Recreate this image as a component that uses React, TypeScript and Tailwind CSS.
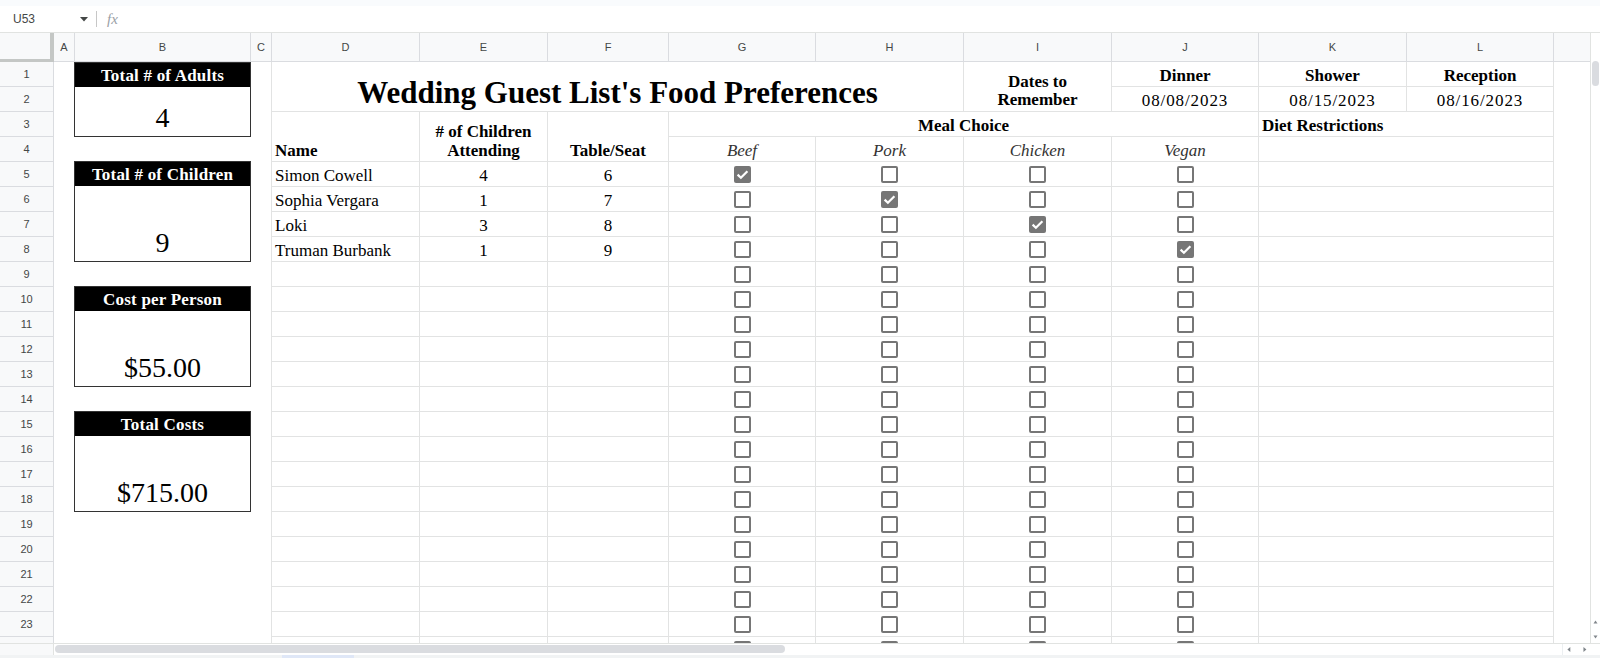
import React from 'react';

const guests = [
  { name: 'Simon Cowell', kids: '4', seat: '6', meal: 0 },
  { name: 'Sophia Vergara', kids: '1', seat: '7', meal: 1 },
  { name: 'Loki', kids: '3', seat: '8', meal: 2 },
  { name: 'Truman Burbank', kids: '1', seat: '9', meal: 3 },
];

const colHeaders = [
  { label: 'A', w: 'w-[21px]' },
  { label: 'B', w: 'w-[176px]' },
  { label: 'C', w: 'w-[21px]' },
  { label: 'D', w: 'w-[148px]' },
  { label: 'E', w: 'w-[128px]' },
  { label: 'F', w: 'w-[121px]' },
  { label: 'G', w: 'w-[147px]' },
  { label: 'H', w: 'w-[148px]' },
  { label: 'I', w: 'w-[148px]' },
  { label: 'J', w: 'w-[147px]' },
  { label: 'K', w: 'w-[148px]' },
  { label: 'L', w: 'w-[147px]' },
];

const summary = [
  { title: 'Total # of Adults', value: '4', h: 'h-[75px]', mt: '' },
  { title: 'Total # of Children', value: '9', h: 'h-[101px]', mt: 'mt-[24px]' },
  { title: 'Cost per Person', value: '$55.00', h: 'h-[101px]', mt: 'mt-[24px]' },
  { title: 'Total Costs', value: '$715.00', h: 'h-[101px]', mt: 'mt-[24px]' },
];

// grid line cell
const cell = 'border-r border-b border-[#e2e3e3]';
const txt = 'flex items-end pb-[1px] leading-[19px]';

const Checkbox = ({ checked }: { checked?: boolean }) =>
  checked ? (
    <span className="flex h-[17px] w-[17px] items-center justify-center rounded-[2px] bg-[#767676]">
      <svg width="15" height="15" viewBox="0 0 15 15">
        <path d="M2.6 7.6 L5.9 10.8 L12.4 4.2" fill="none" stroke="#fff" strokeWidth="2.2" />
      </svg>
    </span>
  ) : (
    <span className="h-[17px] w-[17px] rounded-[2px] border-2 border-[#767676]" />
  );

const TopBar = () => (
  <div className="flex h-[33px] flex-col border-b border-[#e1e3e1]">
    <div className="h-[6px] bg-[#f9fbfd]" />
    <div className="flex flex-1 items-center bg-white font-['Liberation_Sans',sans-serif] text-[12px] text-[#444746]">
      <span className="ml-[13px] w-[67px]">U53</span>
      <svg width="8" height="5" viewBox="0 0 8 5">
        <path d="M0 0 L8 0 L4 4.5 Z" fill="#444746" />
      </svg>
      <span className="ml-[8px] h-[16px] w-px bg-[#c7c7c7]" />
      <span className="ml-[10px] font-['Liberation_Serif',serif] text-[15px] italic text-[#9aa0a6]">fx</span>
    </div>
  </div>
);

const ColumnHeaders = () => (
  <div className="flex h-[29px] bg-[#f8f9fa] font-['Liberation_Sans',sans-serif] text-[11px] text-[#444746]">
    <div className="h-full w-[54px] border-r-[4px] border-b-[3px] border-[#c4c7c5]" />
    {colHeaders.map((c) => (
      <div
        key={c.label}
        className={`${c.w} flex h-full items-center justify-center border-r border-b border-[#dadce0]`}
      >
        {c.label}
      </div>
    ))}
    <div className="h-full flex-1 border-b border-[#dadce0]" />
  </div>
);

const RowHeaders = () => (
  <div className="flex w-[54px] shrink-0 flex-col bg-[#f8f9fa] font-['Liberation_Sans',sans-serif] text-[11px] text-[#444746]">
    {Array.from({ length: 24 }, (_, i) => (
      <div
        key={i}
        className="flex h-[25px] shrink-0 items-center justify-center border-r border-b border-[#dadce0]"
      >
        {i < 23 ? i + 1 : ''}
      </div>
    ))}
  </div>
);

const SummaryColumn = () => (
  <div className="flex w-[218px] shrink-0 flex-col border-r border-[#e2e3e3] pl-[20px]">
    {summary.map((s) => (
      <div key={s.title} className={`${s.h} ${s.mt} flex w-[177px] flex-col border border-[#333]`}>
        <div className="flex h-[24px] items-center justify-center bg-black text-[17px] leading-[19px] font-bold tracking-[0.2px] text-white">
          {s.title}
        </div>
        <div className="flex flex-1 items-end justify-center pb-[4px] text-[28px] leading-none text-black">
          {s.value}
        </div>
      </div>
    ))}
  </div>
);

const Sheet = () => (
  <div className="grid w-[1318px] shrink-0 auto-rows-[25px] grid-cols-[148px_128px_121px_147px_148px_148px_147px_148px_147px_36px] text-[17px] text-black">
    {/* rows 1-2 */}
    <div className={`${cell} col-span-5 row-span-2 flex items-end justify-center pb-[3px] text-[31px] leading-none font-bold`}>
      Wedding Guest List's Food Preferences
    </div>
    <div className={`${cell} row-span-2 flex flex-col items-center justify-end pb-[2px] text-center leading-[18px] font-bold`}>
      <span>Dates to</span>
      <span>Remember</span>
    </div>
    <div className={`${cell} ${txt} justify-center font-bold`}>Dinner</div>
    <div className={`${cell} ${txt} justify-center font-bold`}>Shower</div>
    <div className={`${cell} ${txt} justify-center font-bold`}>Reception</div>
    <div className="row-span-4" />
    <div className={`${cell} ${txt} justify-center tracking-[0.9px]`}>08/08/2023</div>
    <div className={`${cell} ${txt} justify-center tracking-[0.9px]`}>08/15/2023</div>
    <div className={`${cell} ${txt} justify-center tracking-[0.9px]`}>08/16/2023</div>

    {/* rows 3-4 */}
    <div className={`${cell} row-span-2 ${txt} pl-[3px] font-bold`}>Name</div>
    <div className={`${cell} row-span-2 flex flex-col items-center justify-end pb-[1px] leading-[19px] font-bold`}>
      <span># of Children</span>
      <span>Attending</span>
    </div>
    <div className={`${cell} row-span-2 ${txt} justify-center font-bold`}>Table/Seat</div>
    <div className={`${cell} col-span-4 ${txt} justify-center font-bold`}>Meal Choice</div>
    <div className={`${cell} col-span-2 ${txt} pl-[3px] font-bold`}>Diet Restrictions</div>
    <div className={`${cell} ${txt} justify-center italic text-[#333]`}>Beef</div>
    <div className={`${cell} ${txt} justify-center italic text-[#333]`}>Pork</div>
    <div className={`${cell} ${txt} justify-center italic text-[#333]`}>Chicken</div>
    <div className={`${cell} ${txt} justify-center italic text-[#333]`}>Vegan</div>
    <div className={`${cell} col-span-2`} />

    {/* rows 5-24 */}
    {Array.from({ length: 20 }, (_, r) => {
      const g = guests[r];
      return (
        <React.Fragment key={r}>
          <div className={`${cell} ${txt} pl-[3px]`}>{g?.name}</div>
          <div className={`${cell} ${txt} justify-center`}>{g?.kids}</div>
          <div className={`${cell} ${txt} justify-center`}>{g?.seat}</div>
          {[0, 1, 2, 3].map((m) => (
            <div key={m} className={`${cell} flex items-center justify-center`}>
              <Checkbox checked={g?.meal === m} />
            </div>
          ))}
          <div className={`${cell} col-span-2`} />
          <div />
        </React.Fragment>
      );
    })}
  </div>
);

const VScroll = () => (
  <div className="flex w-[10px] flex-col border-l border-[#e1e3e1] bg-white">
    <div className="ml-px mt-[28px] h-[25px] w-[7px] rounded-full bg-[#dadce0]" />
    <div className="flex-1" />
    <svg width="9" height="30" viewBox="0 0 9 30">
      <path d="M2.5 10.5 L6.5 10.5 L4.5 7.5 Z" fill="#80868b" />
      <path d="M2.5 22.5 L6.5 22.5 L4.5 25.5 Z" fill="#80868b" />
    </svg>
  </div>
);

const HScroll = () => (
  <div className="flex h-[12px] border-t border-[#e1e3e1] bg-white">
    <div className="h-full w-[54px] border-r border-[#e1e3e1] bg-[#f8f9fa]" />
    <div className="ml-[1px] mt-[1px] h-[8px] w-[730px] rounded-full bg-[#dadce0]" />
    <div className="ml-auto flex h-full w-[38px] items-center border-l border-[#eceff1]">
      <svg width="38" height="11" viewBox="0 0 38 11">
        <path d="M7.5 3 L7.5 8 L4.5 5.5 Z" fill="#80868b" />
        <path d="M21 3 L21 8 L24 5.5 Z" fill="#80868b" />
      </svg>
    </div>
  </div>
);

export default function App() {
  return (
    <div className="flex h-[658px] w-[1600px] flex-col overflow-hidden bg-white font-['Liberation_Serif',serif]">
      <TopBar />
      <div className="flex h-[610px]">
        <div className="flex w-[1590px] flex-col">
          <ColumnHeaders />
          <div className="flex h-[581px] overflow-hidden">
            <RowHeaders />
            <SummaryColumn />
            <Sheet />
          </div>
        </div>
        <VScroll />
      </div>
      <HScroll />
      <div className="flex h-[3px] bg-[#f1f3f4]">
        <div className="ml-[282px] h-full w-[72px] bg-[#dfe7f7]" />
      </div>
    </div>
  );
}
